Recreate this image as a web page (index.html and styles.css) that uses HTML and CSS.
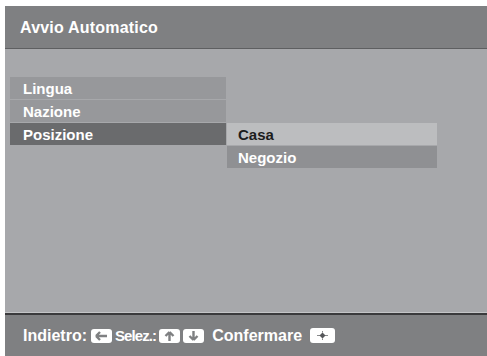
FILE: index.html
```html
<!DOCTYPE html>
<html lang="it">
<head>
    <meta charset="UTF-8">
    <title>Avvio Automatico</title>
    <link rel="stylesheet" href="styles.css">
</head>
<body>
    <div class="screen">
        <div class="header">Avvio Automatico</div>

        <div class="content">
            <div class="menu">
                <div class="menu-item">Lingua</div>
                <div class="menu-item">Nazione</div>
                <div class="menu-item selected">Posizione</div>
            </div>
            <div class="submenu">
                <div class="sub-item active">Casa</div>
                <div class="sub-item">Negozio</div>
            </div>
        </div>

        <div class="footer">
            <span class="label">Indietro:</span>
            <span class="key">
                <svg width="21" height="14" viewBox="0 0 21 14">
                    <path d="M5 7h11M5 7l4-4M5 7l4 4" stroke="#7f8082" stroke-width="2.4" fill="none"/>
                </svg>
            </span>
            <span class="label small">Selez.:</span>
            <span class="key">
                <svg width="21" height="14" viewBox="0 0 21 14">
                    <path d="M10.5 3v9M10.5 3l-4 4M10.5 3l4 4" stroke="#7f8082" stroke-width="2.4" fill="none"/>
                </svg>
            </span>
            <span class="key">
                <svg width="21" height="14" viewBox="0 0 21 14">
                    <path d="M10.5 2v9M10.5 11l-4-4M10.5 11l4-4" stroke="#7f8082" stroke-width="2.4" fill="none"/>
                </svg>
            </span>
            <span class="label wide">Confermare</span>
            <span class="key enter">
                <svg width="25" height="15" viewBox="0 0 25 15">
                    <path d="M7 7.5h3M15 7.5h3M12.5 3v1.5M12.5 10.5v1.5" stroke="#8a8b8d" stroke-width="1"/>
                    <path d="M12.5 4.5l3 3-3 3-3-3z" fill="#56575a"/>
                </svg>
            </span>
        </div>
    </div>
</body>
</html>
```

FILE: styles.css
```css
body {
    margin: 0;
    background: #ffffff;
    font-family: "Liberation Sans", Arial, sans-serif;
    font-weight: bold;
    color: #ffffff;
}
.screen {
    margin: 6px 0 0 5px;
    height: 350px;
    display: flex;
    flex-direction: column;
    background: #a7a8ab;
}
.header {
    height: 42px;
    line-height: 44px;
    padding-left: 15px;
    font-size: 16px;
    letter-spacing: 0.2px;
    background: #7f8082;
    border-bottom: 1px solid #5e5f61;
}
.content {
    flex: 1;
    display: flex;
    gap: 1px;
    padding: 28px 0 0 5px;
}
.menu {
    width: 216px;
    display: flex;
    flex-direction: column;
    gap: 1px;
}
.menu-item {
    height: 22px;
    line-height: 23px;
    padding-left: 13px;
    font-size: 15px;
    background: #97989b;
}
.menu-item.selected {
    background: #6a6b6d;
}
.submenu {
    width: 210px;
    margin-top: 46px;
    display: flex;
    flex-direction: column;
    gap: 1px;
}
.sub-item {
    height: 22px;
    line-height: 23px;
    padding-left: 11px;
    font-size: 15px;
    background: #8f9093;
}
.sub-item.active {
    background: #bcbdbf;
    color: #1c1c1c;
}
.footer {
    height: 41px;
    display: flex;
    align-items: center;
    padding-left: 18px;
    background: #7f8082;
    border-top: 2px solid #3a3a3c;
    box-shadow: 0 -1px 0 #c4c5c7;
}
.label {
    font-size: 16px;
    margin-right: 4px;
}
.label.small {
    font-size: 15px;
    letter-spacing: -0.9px;
    margin-right: 3px;
}
.label.wide {
    margin-left: 5px;
    margin-right: 8px;
}
.key {
    display: flex;
    width: 21px;
    height: 14px;
    margin-right: 3px;
    background: #ffffff;
    border-radius: 3px;
}
.key.enter {
    width: 25px;
    height: 15px;
}
```
